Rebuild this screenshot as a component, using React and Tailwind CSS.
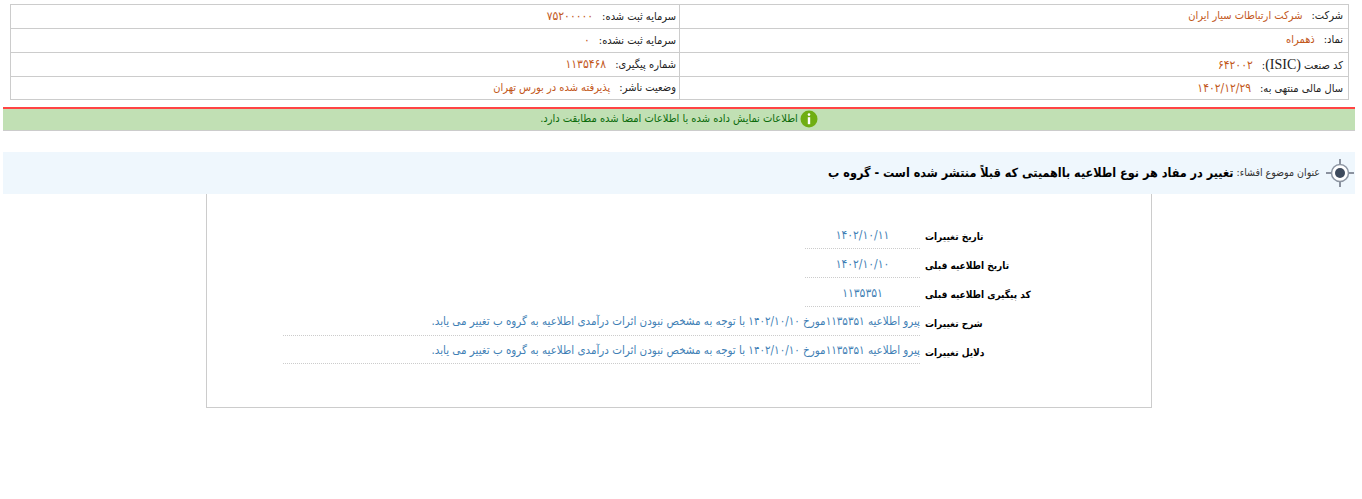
const infoRows = [
  [<>شرکت:</>, "شرکت ارتباطات سیار ایران", "سرمایه ثبت شده:", "۷۵۲۰۰۰۰۰", false, true],
  [<>نماد:</>, "ذهمراه", "سرمایه ثبت نشده:", "۰", false, true],
  [<>کد صنعت <span className="font-['Liberation_Serif',serif] text-[14px]">(ISIC)</span>:</>, "۶۴۲۰۰۲", "شماره پیگیری:", "۱۱۳۵۴۶۸", true, true],
  [<>سال مالی منتهی به:</>, "۱۴۰۲/۱۲/۲۹", "وضعیت ناشر:", "پذیرفته شده در بورس تهران", true, false],
];

const longText =
  "پیرو اطلاعیه ۱۱۳۵۳۵۱مورخ ۱۴۰۲/۱۰/۱۰ با توجه به مشخص نبودن اثرات درآمدی اطلاعیه به گروه ب تغییر می یابد.";

const details = [
  ["تاریخ تغییرات", "۱۴۰۲/۱۰/۱۱"],
  ["تاریخ اطلاعیه قبلی", "۱۴۰۲/۱۰/۱۰"],
  ["کد پیگیری اطلاعیه قبلی", "۱۱۳۵۳۵۱"],
  ["شرح تغییرات", longText, true],
  ["دلایل تغییرات", longText, true],
];

function InfoCell({ label, value, numeric, side }) {
  return (
    <td className={side === "right" ? "w-1/2 whitespace-nowrap border border-[#ccc] p-0 pr-[5px]" : "w-1/2 whitespace-nowrap border border-[#ccc] p-0 pr-[3px]"}>
      <span className="text-[#222]">{label}</span>
      <span className={numeric ? "mr-[9px] text-[12px] text-[#c2571a]" : "mr-[9px] text-[#c2571a]"}>{value}</span>
    </td>
  );
}

function TargetIcon() {
  return (
    <svg width="30" height="30" viewBox="0 0 30 30" className="shrink-0">
      <path d="M15 1v6M15 23v6M1 15h6M23 15h6" stroke="#6b7280" strokeWidth="1.5" />
      <circle cx="15" cy="15" r="8.5" fill="#fff" stroke="#8d96a3" strokeWidth="1.5" />
      <circle cx="15" cy="15" r="5" fill="#3d4a5c" />
    </svg>
  );
}

function InfoIcon() {
  return (
    <svg width="18" height="18" viewBox="0 0 18 18" className="shrink-0">
      <circle cx="9" cy="9" r="8.5" fill="#6fae12" />
      <circle cx="9" cy="4.6" r="1.3" fill="#fff" />
      <path d="M9 7.2v7" stroke="#fff" strokeWidth="2.4" />
    </svg>
  );
}

export default function App() {
  return (
    <div dir="rtl" className="min-h-[499px] bg-white pt-[4px] text-[11px] font-['DejaVu_Sans',sans-serif] font-stretch-condensed text-black">
      <div className="mr-[13px] ml-[10px]">
        <table className="w-full table-fixed border-collapse">
          <tbody>
            {infoRows.map((r, i) => (
              <tr key={r[1]} className={i === 3 ? "h-[23px]" : "h-[24px]"}>
                <InfoCell label={r[0]} value={r[1]} numeric={r[4]} side="right" />
                <InfoCell label={r[2]} value={r[3]} numeric={r[5]} side="left" />
              </tr>
            ))}
          </tbody>
        </table>
      </div>

      <div className="mt-[7px] mr-[7px] ml-[3px] flex h-[24px] items-center justify-center gap-[2px] border-t-2 border-b border-t-[#f44] border-b-[#ccc] bg-[#c1e0b4] pb-[1px] text-[#0b6b0b]">
        <InfoIcon />
        <span>اطلاعات نمایش داده شده با اطلاعات امضا شده مطابقت دارد.</span>
      </div>

      <div className="mt-[21px] mr-[7px] ml-[3px] flex h-[42px] items-center bg-[#eff7fd]">
        <TargetIcon />
        <span className="mr-[5px] text-[10.5px] text-[#333]">عنوان موضوع افشاء:</span>
        <span className="mr-[3px] text-[12.5px] font-bold text-black">
          تغییر در مفاد هر نوع اطلاعیه بااهمیتی که قبلاً منتشر شده است - گروه ب
        </span>
      </div>

      <div className="mr-[210px] ml-[206px] h-[214px] border border-t-0 border-[#ccc] pt-[26px]">
        <div className="flex flex-col">
          {details.map(([label, value, wide], i) => (
            <div key={label} className={i === 4 ? "flex h-[28px] justify-start" : "flex h-[29px] justify-start"}>
              <div className="w-[226px] pt-[9px] text-left text-[10px] font-bold">
                <span dir="rtl" className="inline-block">{label}</span>
              </div>
              <div className="mr-[5px] w-[637px] shrink-0">
                <div className={wide ? "h-full whitespace-nowrap border-b border-dotted border-[#ccc] pt-[6px] text-[11.5px] text-[#3f7fb5]" : "h-full w-[115px] border-b border-dotted border-[#ccc] pt-[6px] text-center text-[12px] text-[#3f7fb5]"}>
                  {value}
                </div>
              </div>
            </div>
          ))}
        </div>
      </div>
    </div>
  );
}
